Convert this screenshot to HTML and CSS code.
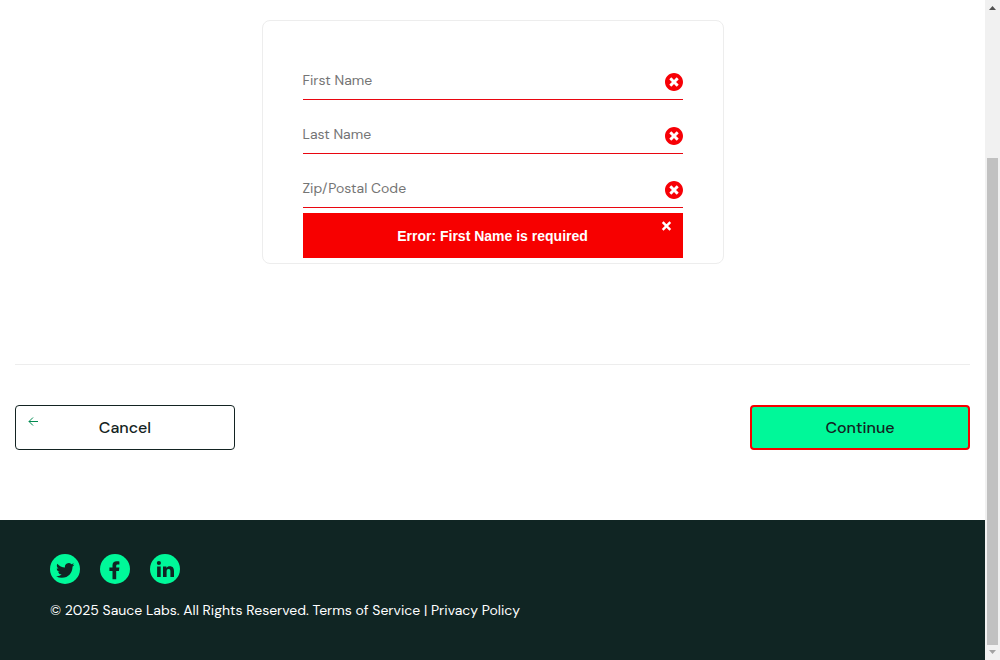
FILE: index.html
```html
<!DOCTYPE html>
<html lang="en">
<head>
<meta charset="utf-8">
<title>Checkout: Your Information</title>
<link rel="stylesheet" href="styles.css">
</head>
<body>
<svg class="defs" aria-hidden="true">
  <symbol id="times-circle" viewBox="8 8 496 496"><path fill="currentColor" d="M256 8C119 8 8 119 8 256s111 248 248 248 248-111 248-248S393 8 256 8zm121.600 313.100c4.700 4.700 4.700 12.300 0 17L338 377.600c-4.700 4.700-12.300 4.700-17 0L256 312l-65.100 65.600c-4.700 4.700-12.300 4.700-17 0L134.400 338c-4.700-4.700-4.700-12.300 0-17l65.600-65-65.600-65.100c-4.700-4.700-4.700-12.300 0-17l39.600-39.600c4.700-4.700 12.300-4.700 17 0l65 65.700 65.100-65.600c4.700-4.700 12.300-4.700 17 0l39.600 39.600c4.700 4.700 4.700 12.300 0 17L312 256l65.600 65.100z"/></symbol>
</svg>
<div class="window">
  <main class="page">
    <form class="checkout">
      <div class="card">
        <div class="field"><span class="placeholder">First Name</span><svg class="error-icon"><use href="#times-circle"/></svg></div>
        <div class="field"><span class="placeholder">Last Name</span><svg class="error-icon"><use href="#times-circle"/></svg></div>
        <div class="field"><span class="placeholder">Zip/Postal Code</span><svg class="error-icon"><use href="#times-circle"/></svg></div>
        <div class="error-message">
          <h3 class="error-text">Error: First Name is required</h3>
          <svg class="close" viewBox="0 0 11 11"><path d="M1.700 1.200L9.300 8.800M9.300 1.200L1.700 8.800"/></svg>
        </div>
      </div>
      <div class="actions">
        <button type="button" class="btn cancel"><svg class="arrow" viewBox="0 0 10 10"><path d="M10 4.500H1M5 .5L1 4.500l4 4"/></svg><span class="label">Cancel</span></button>
        <button type="button" class="btn continue"><span class="label">Continue</span></button>
      </div>
    </form>
    <footer class="footer">
      <div class="social">
        <a class="badge"><svg viewBox="0 0 30 30"><g transform="translate(6.100 7.300) scale(.76)"><path d="M23.950 4.570a10 10 0 0 1-2.820.770 4.960 4.960 0 0 0 2.160-2.720c-.950.550-2 .950-3.130 1.180a4.920 4.920 0 0 0-8.380 4.480C7.690 8.090 4.070 6.130 1.640 3.160a4.820 4.820 0 0 0-.670 2.480c0 1.710.870 3.210 2.190 4.100a4.900 4.900 0 0 1-2.230-.620v.060a4.920 4.920 0 0 0 3.950 4.830 5 5 0 0 1-2.210.080 4.940 4.940 0 0 0 4.600 3.420A9.870 9.870 0 0 1 0 19.540a14 14 0 0 0 7.550 2.210c9.050 0 14-7.500 14-13.980 0-.210 0-.420-.020-.630a9.900 9.900 0 0 0 2.420-2.570z"/></g></svg></a>
        <a class="badge"><svg viewBox="0 0 30 30"><path d="M12.500 25.300v-8.200H9.400v-3.500h3.100v-2.400c0-2.600 1.600-4 4.200-4 1.200 0 2.700.2 2.700.2v3h-1.700c-1.200 0-1.500.7-1.500 1.500v1.700h3.200l-.5 3.500h-2.700v8.200z"/></svg></a>
        <a class="badge"><svg viewBox="0 0 30 30"><circle cx="8.900" cy="9" r="2.100"/><path d="M7.100 12.500h3.600v10.400H7.100zM13 12.500h3.400v1.400c.6-1 1.800-1.700 3.300-1.700 3.400 0 4.300 2.200 4.300 5v5.700h-3.600v-5.100c0-1.300-.1-2.700-1.800-2.700s-2 1.300-2 2.600v5.200H13z"/></svg></a>
      </div>
      <div class="copy">© 2025 Sauce Labs. All Rights Reserved. Terms of Service | Privacy Policy</div>
    </footer>
  </main>
  <div class="scrollbar">
    <svg class="scroll-arrow" viewBox="0 0 15 15"><path fill="#505050" d="M4 10L7.500 6 11 10z"/></svg>
    <div class="track"><div class="thumb"></div></div>
    <svg class="scroll-arrow" viewBox="0 0 15 15"><path fill="#a3a3a3" d="M4 5l3.500 4L11 5z"/></svg>
  </div>
</div>
</body>
</html>
```
FILE: styles.css
```css
* { box-sizing: border-box; }

body {
  margin: 0;
  overflow: hidden;
  background: #fff;
  color: #132322;
  font-family: "DM Sans", Inter, sans-serif;
  font-size: 14px;
}

.defs { display: none; }

.window { display: flex; height: 660px; }

.page { flex: 1; display: flex; flex-direction: column; }

.checkout {
  flex: 1;
  display: flex;
  flex-direction: column;
  padding: 20px 15px 0;
}

.card {
  align-self: center;
  width: 462px;
  height: 244px;
  padding: 40px 40px 0;
  border: 1px solid #ededed;
  border-radius: 8px;
}

.field {
  display: flex;
  justify-content: space-between;
  height: 39px;
  margin-bottom: 15px;
  border-bottom: 1px solid #e90610;
}

.placeholder {
  color: #757575;
  line-height: 39px;
  white-space: nowrap;
}

.error-icon {
  width: 18px;
  height: 18px;
  margin-top: 12px;
  color: #f70006;
}

.error-message {
  display: grid;
  grid-template-columns: 1fr;
  width: 380px;
  height: 45px;
  margin-top: -10px;
  background: #f70000;
}

.error-text {
  grid-area: 1 / 1;
  place-self: center;
  margin: 0;
  color: #fff;
  font: bold 14px/18px "Liberation Sans", Arial, sans-serif;
}

.close {
  grid-area: 1 / 1;
  justify-self: end;
  width: 11px;
  height: 11px;
  margin: 8px 11px 0 0;
  fill: none;
  stroke: #fff;
  stroke-width: 2.4;
}

.actions {
  display: flex;
  justify-content: space-between;
  margin-top: 100px;
  padding-top: 40px;
  border-top: 1px solid #ededed;
}

.btn {
  display: grid;
  width: 220px;
  height: 45px;
  padding: 0;
  border-radius: 4px;
  color: #132322;
  font: 500 16px/20px "DM Sans", Inter, sans-serif;
}

.cancel { border: 1px solid #132322; background: #fff; }
.continue { border: 2px solid #f70000; background: #00f899; }

.label { grid-area: 1 / 1; place-self: center; }

.arrow {
  grid-area: 1 / 1;
  width: 10px;
  height: 10px;
  margin: 11px 0 0 12px;
  fill: none;
  stroke: #008a50;
  stroke-width: 1;
}

.footer {
  height: 140px;
  padding: 34px 50px 0;
  background: #102523;
  color: #fff;
}

.social { display: flex; gap: 20px; }

.badge {
  width: 30px;
  height: 30px;
  border-radius: 50%;
  background: #00f899;
  fill: #102523;
}

.badge svg { display: block; width: 30px; height: 30px; }

.copy {
  margin-top: 16px;
  line-height: 20px;
  white-space: nowrap;
}

.scrollbar {
  display: flex;
  flex-direction: column;
  width: 15px;
  background: #f1f1f1;
}

.scroll-arrow { width: 15px; height: 15px; }

.track { flex: 1; padding: 143px 2px 0; }

.thumb { height: 487px; background: #c1c1c1; }
```
